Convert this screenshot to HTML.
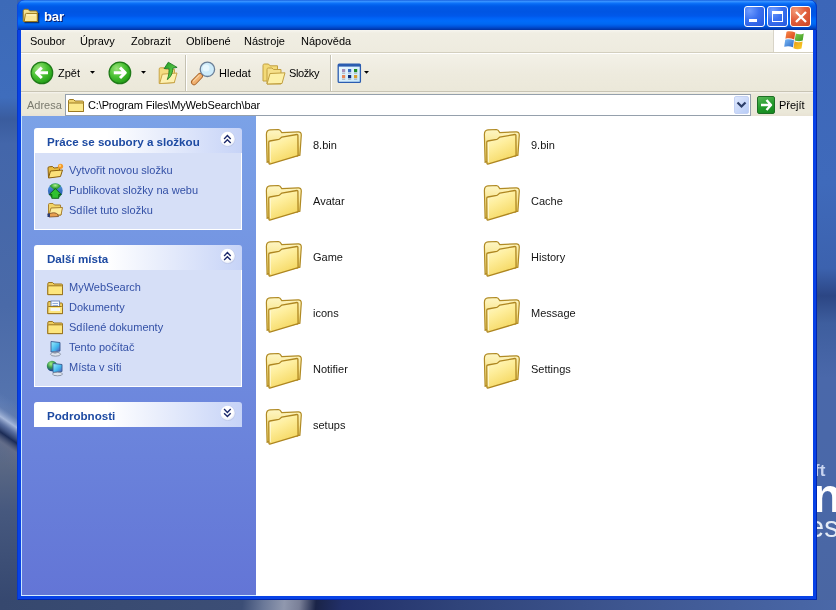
<!DOCTYPE html>
<html><head><meta charset="utf-8">
<style>
*{margin:0;padding:0;box-sizing:border-box}
html,body{width:836px;height:610px;overflow:hidden;-webkit-font-smoothing:antialiased;background:#3b62a8;font-family:"Liberation Sans",sans-serif;font-size:11px;color:#000}
.a{position:absolute}
svg.a{overflow:visible}
#dl{left:0;top:0;width:17px;height:610px;background:linear-gradient(180deg,#3c6ab8 0%,#3f6dbc 16%,#3a5c9e 20%,#4366aa 24%,#4a6aa8 50%,#4d6ca6 66%,#92a6cc 68.8%,#1e3264 71.5%,#2a3c68 73%,#5a6a8c 76%,#46587e 84%,#34466e 100%)}
#dr{left:817px;top:0;width:19px;height:610px;background:linear-gradient(180deg,#3c66b8 0%,#3f6abb 30%,#3c62ae 44%,#2c4684 48.5%,#3e5e9e 53%,#4a68aa 62%,#4a68a8 80%,#4a66a2 100%)}
#db{left:0;top:600px;width:836px;height:10px;background:linear-gradient(95deg,#36486e 0%,#3c4e76 29%,#6a7898 31.5%,#9098ae 34%,#7a8098 35.8%,#1a2448 37.8%,#22306a 41%,#30447a 55%,#3e5690 75%,#4a68a8 100%)}
#win{left:17px;top:0;width:800px;height:600px;background:#0842e6;border-radius:8px 8px 0 0;box-shadow:inset 1px 0 0 #0636cc,inset -1px -1px 0 #0026b0}
#title{left:17px;top:0;width:800px;height:30px;border-radius:7px 7px 0 0;box-shadow:inset -1px 0 0 #0436c0,inset 1px 0 0 #0a48e0;
 background:linear-gradient(180deg,#0a4fd6 0px,#3d95ff 1px,#2e8cff 2px,#0f74fa 3px,#0262ee 5px,#0058e6 7px,#0055e3 12px,#0058ea 16px,#0062f6 18px,#006cfa 21px,#0068f2 24px,#0058e2 26px,#0046c4 28px,#0030a0 30px)}
#ttext{left:44px;top:9px;color:#fff;font-weight:bold;font-size:13.2px;letter-spacing:-0.2px;text-shadow:1px 1px 0 #0a1e6e}
.tb{top:6px;width:21px;height:21px;border:1px solid #fff;border-radius:3px;background:radial-gradient(circle at 25% 20%,#6f9cff 0%,#3a70f0 45%,#2558dc 100%)}
#client{left:21px;top:30px;width:792px;height:566px;background:#fff}
#menu{left:21px;top:30px;width:792px;height:22px;background:linear-gradient(180deg,#f7f6f0 0,#f0eee3 3px,#eeebdf 100%)}
#menusep{left:21px;top:52px;width:792px;height:1px;background:#d3cfbf}
#menusep2{left:21px;top:53px;width:792px;height:1px;background:#fff}
.mi{top:35px}
#logo{left:773px;top:30px;width:40px;height:22px;background:#fff;border-left:1px solid #d8d4c8}
#tool{left:21px;top:54px;width:792px;height:38px;background:linear-gradient(180deg,#f3f1e8 0%,#eeebde 50%,#ebe8d9 100%)}
#toolsep{left:21px;top:91px;width:792px;height:1px;background:#c8c4b4}
#addr{left:21px;top:92px;width:792px;height:24px;background:linear-gradient(180deg,#f6f5ef 0,#ebe8d9 2px,#ebe8d9 20px,#e8e2d4 100%)}
.vs{width:2px;border-left:1px solid #c5c2b2;border-right:1px solid #fff}
#abox{left:65px;top:94px;width:686px;height:22px;background:#fff;border:1px solid #95a0ac}
#pane{left:21px;top:116px;width:235px;height:480px;background:linear-gradient(180deg,#7ba2e7 0%,#6375d6 100%)}
#paneedge{left:21px;top:116px;width:1px;height:480px;background:#c4e4ff}
#panebot{left:21px;top:595px;width:235px;height:1px;background:#d4ecff}
.hd{left:34px;width:208px;height:25px;border-radius:3px 3px 0 0;background:linear-gradient(90deg,#fff 0%,#fff 35%,#c6d3f7 100%)}
.hd span{position:absolute;left:13px;top:7px;font-weight:bold;font-size:11.6px;color:#1d4aa2}
.bd{left:34px;width:208px;background:#d6dff7;border:1px solid #fff;border-top:none}
.lk{left:69px;color:#3350a6;font-size:11px}
.btn{width:16px;height:16px;border-radius:50%;background:radial-gradient(circle at 40% 35%,#fff 0%,#fff 50%,#e4eafa 100%);box-shadow:1px 1px 2px rgba(40,60,140,.45)}
.fn{font-size:11px;color:#151515}
</style></head><body><div style="position:absolute;left:0;top:0;width:836px;height:610px;will-change:transform">
<svg width="0" height="0" style="position:absolute">
 <defs>
  <radialGradient id="gBtn" cx="0.45" cy="0.4" r="0.6"><stop offset="0" stop-color="#fff"/><stop offset="0.7" stop-color="#fff"/><stop offset="1" stop-color="#e6ebf8"/></radialGradient>
  <linearGradient id="gfB" x1="0" y1="0" x2="0" y2="1"><stop offset="0" stop-color="#fef6c4"/><stop offset="0.5" stop-color="#f8e48a"/><stop offset="1" stop-color="#ecd060"/></linearGradient>
  <linearGradient id="gfF" x1="0" y1="0" x2="0.5" y2="1"><stop offset="0" stop-color="#fffad0"/><stop offset="0.45" stop-color="#feee9c"/><stop offset="1" stop-color="#f5d862"/></linearGradient>
  
  
 </defs>
</svg>
<svg class="a" style="left:0;top:0" width="17" height="610" viewBox="0 0 17 610">
 <defs>
  <linearGradient id="dlv" x1="0" y1="0" x2="0" y2="610" gradientUnits="userSpaceOnUse">
   <stop offset="0" stop-color="#3c6ab8"/><stop offset="0.16" stop-color="#3f6dbc"/><stop offset="0.195" stop-color="#3a5c9e"/><stop offset="0.235" stop-color="#4366aa"/>
   <stop offset="0.5" stop-color="#4a6aa8"/><stop offset="0.66" stop-color="#5574ae"/><stop offset="0.76" stop-color="#5a6884"/><stop offset="0.84" stop-color="#46587e"/><stop offset="1" stop-color="#34466e"/>
  </linearGradient>
  <linearGradient id="dls" x1="19.9" y1="405.5" x2="-14.2" y2="455" gradientUnits="userSpaceOnUse">
   <stop offset="0" stop-color="#8ca5d2" stop-opacity="0"/><stop offset="0.2" stop-color="#8ca5d2" stop-opacity="0.2"/>
   <stop offset="0.333" stop-color="#aebfe0" stop-opacity="0.9"/><stop offset="0.44" stop-color="#506496" stop-opacity="0.7"/>
   <stop offset="0.547" stop-color="#14244e" stop-opacity="0.9"/><stop offset="0.68" stop-color="#6a6e84" stop-opacity="0.6"/><stop offset="1" stop-color="#5a6884" stop-opacity="0"/>
  </linearGradient>
 </defs>
 <rect width="17" height="610" fill="url(#dlv)"/>
 <rect width="17" height="610" fill="url(#dls)"/>
</svg><div class="a" id="dr"></div><div class="a" id="db"></div>
<div class="a" style="left:814px;top:461px;color:#c8d4f0;font-size:17px;line-height:20px;font-weight:bold">ft</div>
<div class="a" style="left:812px;top:469px;color:#fff;font-size:49px;line-height:52px;font-weight:bold">n</div>
<div class="a" style="left:808px;top:511px;color:#e4ebf6;font-size:29px;line-height:32px">es</div>
<div class="a" id="win"></div>
<div class="a" id="title"></div>
<svg class="a" style="left:22px;top:8px" width="17" height="15" viewBox="0 0 17 15">
   <path d="M2.5,14.5 L16.5,14.5 L16.5,5" stroke="#10204a" stroke-width="1.6" fill="none" opacity=".75"/>
   <path d="M1.2,13.3 L1.2,3.2 C1.2,2 2,1.3 3.2,1.3 L6,1.3 L7.6,3 L14,3 C14.8,3 15.3,3.6 15.3,4.3 L15.3,13.3 Z" fill="#f4e090" stroke="#9c7818" stroke-width="1"/>
   <path d="M2.2,13.5 L3.4,6.2 C3.5,5.7 3.9,5.4 4.4,5.4 L15.3,5.4 L15.3,13.5 Z" fill="#fde89a" stroke="#9c7818" stroke-width="1"/>
   <path d="M4.5,7 L14,7" stroke="#fff6d0" stroke-width="1"/>
  </svg>
<div class="a" id="ttext">bar</div>
<div class="a tb" style="left:744px"><div class="a" style="left:4px;top:12px;width:8px;height:3px;background:#fff"></div></div>
<div class="a tb" style="left:767px"><div class="a" style="left:4px;top:4px;width:11px;height:11px;border:1px solid #fff;border-top-width:3px"></div></div>
<div class="a tb" style="left:790px;background:radial-gradient(circle at 25% 20%,#f39a78 0%,#e2603e 45%,#cc4424 100%)">
 <svg class="a" style="left:4px;top:4px" width="12" height="12"><path d="M1,1 L11,11 M11,1 L1,11" stroke="#fff" stroke-width="2.3"/></svg>
</div>
<div class="a" id="client"></div>
<div class="a" id="menu"></div>
<div class="a" id="menusep"></div><div class="a" id="menusep2"></div>
<div class="a mi" style="left:30px">Soubor</div>
<div class="a mi" style="left:80px">Úpravy</div>
<div class="a mi" style="left:131px">Zobrazit</div>
<div class="a mi" style="left:186px">Oblíbené</div>
<div class="a mi" style="left:244px">Nástroje</div>
<div class="a mi" style="left:301px">Nápověda</div>
<div class="a" id="logo"></div>
<svg class="a" style="left:783px;top:31px" width="22" height="19" viewBox="0 0 22 19">
 <defs>
  <linearGradient id="fR" x1="0" y1="0" x2="1" y2="1"><stop offset="0" stop-color="#f88a50"/><stop offset="1" stop-color="#d84412"/></linearGradient>
  <linearGradient id="fGr" x1="0" y1="0" x2="1" y2="1"><stop offset="0" stop-color="#7fcc50"/><stop offset="1" stop-color="#3c9a22"/></linearGradient>
  <linearGradient id="fB" x1="0" y1="0" x2="1" y2="1"><stop offset="0" stop-color="#7ab8f4"/><stop offset="1" stop-color="#2a6ac8"/></linearGradient>
  <linearGradient id="fY" x1="0" y1="0" x2="1" y2="1"><stop offset="0" stop-color="#e89a18"/><stop offset="1" stop-color="#fad028"/></linearGradient>
 </defs>
 <path d="M3.5,0.8 C6,0 9,0.3 12.3,1.5 L11.2,8.4 C8,7.2 5.2,7 2.4,7.8 Z" fill="url(#fR)"/>
 <path d="M12.8,2.6 C15.5,3.6 18,3.6 20.8,2.5 L19.7,9.6 C17,10.6 14.5,10.5 11.7,9.5 Z" fill="url(#fGr)"/>
 <path d="M2.2,8.8 C5,8 8,8.2 11,9.3 L9.9,16.2 C7,15 4.2,14.8 1.2,15.8 Z" fill="url(#fB)"/>
 <path d="M11.5,10.3 C14.3,11.4 16.8,11.4 19.6,10.4 L18.5,17.5 C15.8,18.5 13.2,18.4 10.4,17.3 Z" fill="url(#fY)"/>
</svg>
<div class="a" id="tool"></div>
<div class="a" id="toolsep"></div>
<!-- back -->
<svg class="a" style="left:29px;top:60px" width="26" height="26" viewBox="0 0 26 26">
 <defs><radialGradient id="gG" cx="0.35" cy="0.3" r="0.75"><stop offset="0" stop-color="#9be37a"/><stop offset="0.5" stop-color="#4cc235"/><stop offset="1" stop-color="#1e9a14"/></radialGradient></defs>
 <circle cx="12.9" cy="12.9" r="10.8" fill="url(#gG)" stroke="#1f7a18" stroke-width="1.2"/>
 <path d="M12.8,7.6 L7.5,12.8 L12.8,18 M7.8,12.8 L19,12.8" fill="none" stroke="#fff" stroke-width="3" stroke-linejoin="round"/>
</svg>
<div class="a" style="left:58px;top:67px">Zpět</div>
<svg class="a" style="left:89px;top:71px" width="7" height="4"><path d="M1,0 L6,0 L3.5,2.8 Z" fill="#000"/></svg>
<!-- forward -->
<svg class="a" style="left:107px;top:60px" width="26" height="26" viewBox="0 0 26 26">
 <circle cx="12.9" cy="12.9" r="10.8" fill="url(#gG)" stroke="#1f7a18" stroke-width="1.2"/>
 <path d="M13,7.6 L18.3,12.8 L13,18 M18,12.8 L6.8,12.8" fill="none" stroke="#fff" stroke-width="3" stroke-linejoin="round"/>
</svg>
<svg class="a" style="left:140px;top:71px" width="7" height="4"><path d="M1,0 L6,0 L3.5,2.8 Z" fill="#000"/></svg>
<!-- up -->
<svg class="a" style="left:156px;top:60px" width="24" height="26" viewBox="0 0 24 26">
 <defs><linearGradient id="gUp" x1="0" y1="0" x2="1" y2="1"><stop offset="0" stop-color="#1e9a20"/><stop offset="0.6" stop-color="#58c848"/><stop offset="1" stop-color="#1a8a1e"/></linearGradient></defs>
 <path d="M3.2,23.5 L3.2,9 C3.2,8.2 3.6,7.8 4.4,7.8 L8,7.8 L9.5,9.3 L18.5,9.3 L18.5,22.5 Z" fill="#f3dc80" stroke="#c8a448" stroke-width="1"/>
 <path d="M3.6,23.6 L6.3,14.2 L21,13 L18.3,22.6 Z" fill="#fdf0b0" stroke="#c8a448" stroke-width="1"/>
 <path d="M12.3,2.2 L8.1,8.6 L12.8,8.3 C13.3,11 13,15 11.3,19.6 C14.5,17.5 16.5,14 16.9,8.1 L21.1,7.4 Z" fill="url(#gUp)" stroke="#14701a" stroke-width="0.8" stroke-linejoin="round"/>
</svg>
<div class="a vs" style="left:185px;top:55px;height:36px"></div>
<!-- search -->
<svg class="a" style="left:190px;top:60px" width="28" height="26" viewBox="0 0 28 26">
 <path d="M10,16 L4,22.2" stroke="#a8642a" stroke-width="6" stroke-linecap="round"/>
 <path d="M10,16 L4,22.2" stroke="#f0b070" stroke-width="4.2" stroke-linecap="round"/>
 <path d="M9,15.5 L3.5,21" stroke="#ffe0b0" stroke-width="1.2" stroke-linecap="round" opacity=".7"/>
 <circle cx="17.4" cy="9.3" r="7.2" fill="#cdebfa" stroke="#6a7e96" stroke-width="1.3"/>
 <circle cx="16" cy="8" r="3.5" fill="#eefaff" opacity=".8"/>
</svg>
<div class="a" style="left:219px;top:67px">Hledat</div>
<!-- folders -->
<svg class="a" style="left:261px;top:62px" width="26" height="24" viewBox="0 0 26 24">
 <path d="M2,19 L2,3.5 C2,2.6 2.5,2 3.4,2 L7.5,2 L9,3.8 L16.5,3.8 L16.5,19 Z" fill="#f3da78" stroke="#c2a040" stroke-width="1"/>
 <path d="M6,22 L6,7.5 C6,6.6 6.5,6 7.4,6 L11,6 L12.5,7.5 L20,7.5 L20,22 Z" fill="#f6e08a" stroke="#c2a040" stroke-width="1"/>
 <path d="M6,22 L9,11.5 L24,10.8 L21,21.5 Z" fill="#fdf0a6" stroke="#c2a040" stroke-width="1"/>
</svg>
<div class="a" style="left:289px;top:67px;letter-spacing:-0.4px">Složky</div>
<div class="a vs" style="left:330px;top:55px;height:36px"></div>
<!-- views -->
<svg class="a" style="left:337px;top:63px" width="25" height="21" viewBox="0 0 25 21">
 <defs><linearGradient id="gVw" x1="0" y1="0" x2="1" y2="1"><stop offset="0" stop-color="#f0faff"/><stop offset="1" stop-color="#c4e6fa"/></linearGradient></defs><rect x="1.2" y="1.2" width="22.2" height="18.2" rx="1" fill="url(#gVw)" stroke="#2a5cb0" stroke-width="1.3"/>
 <rect x="1" y="1" width="22.5" height="2.6" fill="#2a5cb0"/>
 <rect x="5" y="6" width="3.2" height="3.2" fill="#a890b8"/><rect x="11" y="6" width="3.2" height="3.2" fill="#3c6cc0"/><rect x="17" y="6" width="3.2" height="3.2" fill="#1e8a28"/>
 <rect x="5" y="12" width="3.2" height="3.2" fill="#e8885a"/><rect x="11" y="12" width="3.2" height="3.2" fill="#102e78"/><rect x="17" y="12" width="3.2" height="3.2" fill="#d8a030"/>
 <path d="M5,10.3h3.2M11,10.3h3.2M17,10.3h3.2M5,16.3h3.2M11,16.3h3.2M17,16.3h3.2" stroke="#9aa6b4" stroke-width=".8"/>
</svg>
<svg class="a" style="left:363px;top:71px" width="7" height="4"><path d="M1,0 L6,0 L3.5,2.8 Z" fill="#000"/></svg>
<!-- address -->
<div class="a" id="addr"></div>
<div class="a" style="left:27px;top:99px;color:#7a7a6e">Adresa</div>
<div class="a" id="abox"></div>
<svg class="a" style="left:67px;top:98px" width="18" height="15" viewBox="0 0 18 15">
 <path d="M1.5,13.5 L1.5,3 C1.5,2 2,1.5 3,1.5 L6.5,1.5 L8,3 L15.5,3 C16.2,3 16.5,3.5 16.5,4 L16.5,13.5 Z" fill="#f0d470" stroke="#9c7a20" stroke-width="1"/>
 <path d="M1.5,13.5 L1.5,6 C1.5,5.4 1.9,5 2.5,5 L15.5,5 C16.1,5 16.5,5.4 16.5,6 L16.5,13.5 Z" fill="#fce98c" stroke="#9c7a20" stroke-width="1"/>
</svg>
<div class="a" style="left:88px;top:99px;letter-spacing:-0.14px">C:\Program Files\MyWebSearch\bar</div>
<div class="a" style="left:734px;top:96px;width:15px;height:18px;border-radius:2px;background:linear-gradient(135deg,#dfe8fd,#b8ccf6);border:1px solid #c4d2f4"></div>
<svg class="a" style="left:736px;top:101px" width="11" height="8"><path d="M1.5,1.5 L5.5,5.5 L9.5,1.5" fill="none" stroke="#2c3e68" stroke-width="2.2"/></svg>
<div class="a" style="left:757px;top:96px;width:18px;height:18px;border-radius:2px;background:linear-gradient(160deg,#58b858,#229a2a 55%,#14861e);border:1px solid #1e6e24"></div>
<svg class="a" style="left:757px;top:96px" width="18" height="18" viewBox="0 0 18 18"><path d="M9.5,4 L14,9 L9.5,14 M13.5,9 L4,9" fill="none" stroke="#fff" stroke-width="2.4" stroke-linejoin="round"/></svg>
<div class="a" style="left:779px;top:99px">Přejít</div>
<!-- pane -->
<div class="a" id="pane"></div>
<div class="a" id="paneedge"></div><div class="a" id="panebot"></div>
<div class="a hd" style="top:128px"><span>Práce se soubory a složkou</span></div>
<svg class="a" style="left:218px;top:130px" width="20" height="18" viewBox="0 0 20 18"><circle cx="9.9" cy="9.4" r="7.6" fill="#b4bedc" opacity=".55"/><circle cx="9.6" cy="9" r="7.2" fill="url(#gBtn)"/><path d="M6.1,8.9 L9.4,5.6 L12.7,8.9 M6.1,13 L9.4,9.7 L12.7,13" fill="none" stroke="#1c2a6c" stroke-width="1.4"/></svg>
<div class="a bd" style="top:153px;height:77px"></div>
<div class="a lk" style="top:164px">Vytvořit novou složku</div>
<div class="a lk" style="top:184px">Publikovat složky na webu</div>
<div class="a lk" style="top:204px">Sdílet tuto složku</div>
<div class="a hd" style="top:245px"><span>Další místa</span></div>
<svg class="a" style="left:218px;top:247px" width="20" height="18" viewBox="0 0 20 18"><circle cx="9.9" cy="9.4" r="7.6" fill="#b4bedc" opacity=".55"/><circle cx="9.6" cy="9" r="7.2" fill="url(#gBtn)"/><path d="M6.1,8.9 L9.4,5.6 L12.7,8.9 M6.1,13 L9.4,9.7 L12.7,13" fill="none" stroke="#1c2a6c" stroke-width="1.4"/></svg>
<div class="a bd" style="top:270px;height:117px"></div>
<div class="a lk" style="top:281px">MyWebSearch</div>
<div class="a lk" style="top:301px">Dokumenty</div>
<div class="a lk" style="top:321px">Sdílené dokumenty</div>
<div class="a lk" style="top:341px">Tento počítač</div>
<div class="a lk" style="top:361px">Místa v síti</div>
<div class="a hd" style="top:402px"><span>Podrobnosti</span></div>
<svg class="a" style="left:218px;top:404px" width="20" height="18" viewBox="0 0 20 18"><circle cx="9.9" cy="9.4" r="7.6" fill="#b4bedc" opacity=".55"/><circle cx="9.6" cy="9" r="7.2" fill="url(#gBtn)"/><path d="M6.1,5.1 L9.4,8.4 L12.7,5.1 M6.1,9.2 L9.4,12.5 L12.7,9.2" fill="none" stroke="#1c2a6c" stroke-width="1.4"/></svg>

<!-- task icons -->
<svg class="a" style="left:46px;top:162px" width="18" height="18" viewBox="0 0 18 18">
 <path d="M2.5,15.5 L2,6 C2,5.2 2.4,4.8 3.2,4.8 L6.5,4.5 L8,6 L13.5,5.5 L14,14 Z" fill="#e8bc40" stroke="#8a6010" stroke-width="1"/>
 <path d="M2.5,16 L4.5,9 L16.5,8 L14.5,14.5 Z" fill="#fbe07a" stroke="#8a6010" stroke-width="1"/>
 <circle cx="14.5" cy="4.3" r="2.6" fill="#f49a2a"/><circle cx="14" cy="3.8" r="1.2" fill="#ffd070"/>
</svg>
<svg class="a" style="left:46px;top:182px" width="18" height="18" viewBox="0 0 18 18">
 <defs><radialGradient id="gGl" cx="0.5" cy="0.3" r="0.7"><stop offset="0" stop-color="#b0f090"/><stop offset="0.5" stop-color="#3aa83a"/><stop offset="1" stop-color="#1a6a2a"/></radialGradient>
 <linearGradient id="gBl" x1="0" y1="0" x2="0" y2="1"><stop offset="0" stop-color="#5aa0e8"/><stop offset="1" stop-color="#1a4aa0"/></linearGradient></defs>
 <circle cx="9.3" cy="8.7" r="7.4" fill="url(#gBl)"/>
 <path d="M9.3,8.7 L3.6,3.9 A7.4,7.4 0 0 1 15,3.9 Z" fill="url(#gGl)"/>
 <path d="M9.3,8.7 L15,13.5 A7.4,7.4 0 0 1 3.6,13.5 Z" fill="#2a9a2a"/>
 <path d="M9.3,6.5 L15.3,12.5 L12.8,12.5 L12.8,16.3 L5.8,16.3 L5.8,12.5 L3.3,12.5 Z" fill="#30c030" stroke="#0a5a14" stroke-width=".9" stroke-linejoin="round"/>
</svg>
<svg class="a" style="left:46px;top:201px" width="18" height="17" viewBox="0 0 18 17">
 <path d="M2.5,14 L2.5,3.5 C2.5,2.8 3,2.5 3.6,2.5 L7,2.5 L8.5,4 L14.5,4 L15,14 Z" fill="#f2d468" stroke="#a88030" stroke-width="1"/>
 <path d="M3,14 L5,7 L16.5,6.5 L15,14 Z" fill="#fdec9c" stroke="#a88030" stroke-width="1"/>
 <path d="M2,13 L6,12 C8,11.5 10,12 11.5,13 L12.5,15.5 L3,16 Z" fill="#e8a050" stroke="#7a4a20" stroke-width=".8"/>
 <rect x="1.5" y="12.5" width="2.5" height="3.5" fill="#2a3a70"/>
</svg>
<svg class="a" style="left:46px;top:281px" width="18" height="15" viewBox="0 0 18 15">
 <path d="M1.8,13.6 L1.8,2.8 C1.8,2 2.3,1.5 3,1.5 L6.5,1.5 L8,3 L15.5,3 C16.2,3 16.5,3.5 16.5,4 L16.5,13.6 Z" fill="#eccb5c" stroke="#9a7420" stroke-width="1"/>
 <path d="M1.8,13.6 L1.8,5.8 C1.8,5.2 2.2,4.8 2.8,4.8 L15.5,4.8 C16.1,4.8 16.5,5.2 16.5,5.8 L16.5,13.6 Z" fill="#fde67e" stroke="#9a7420" stroke-width="1"/>
</svg>
<svg class="a" style="left:46px;top:300px" width="18" height="15" viewBox="0 0 18 15">
 <path d="M1.8,13.6 L1.8,2.8 C1.8,2 2.3,1.5 3,1.5 L6.5,1.5 L8,3 L15.5,3 C16.2,3 16.5,3.5 16.5,4 L16.5,13.6 Z" fill="#eccb5c" stroke="#9a7420" stroke-width="1"/>
 <rect x="5" y="1" width="8.5" height="9" fill="#f4f8ff" stroke="#6a86b8" stroke-width=".9"/>
 <path d="M6.5,3.5h5.5M6.5,5.5h5.5" stroke="#7a9ad0" stroke-width=".8"/>
 <path d="M1.8,13.6 L1.8,7.5 C1.8,6.9 2.2,6.5 2.8,6.5 L15.5,6.5 C16.1,6.5 16.5,6.9 16.5,7.5 L16.5,13.6 Z" fill="#fde67e" stroke="#9a7420" stroke-width="1"/>
 <rect x="4.5" y="8" width="9.5" height="3" fill="#f4f8ff" opacity=".9"/>
</svg>
<svg class="a" style="left:46px;top:320px" width="18" height="15" viewBox="0 0 18 15">
 <path d="M1.8,13.6 L1.8,2.8 C1.8,2 2.3,1.5 3,1.5 L6.5,1.5 L8,3 L15.5,3 C16.2,3 16.5,3.5 16.5,4 L16.5,13.6 Z" fill="#eccb5c" stroke="#9a7420" stroke-width="1"/>
 <path d="M1.8,13.6 L1.8,5.8 C1.8,5.2 2.2,4.8 2.8,4.8 L15.5,4.8 C16.1,4.8 16.5,5.2 16.5,5.8 L16.5,13.6 Z" fill="#fde67e" stroke="#9a7420" stroke-width="1"/>
</svg>
<svg class="a" style="left:48px;top:340px" width="14" height="17" viewBox="0 0 14 17">
 <defs><linearGradient id="gMon" x1="0" y1="0" x2="1" y2="1"><stop offset="0" stop-color="#9ef0ff"/><stop offset="0.6" stop-color="#40b4ec"/><stop offset="1" stop-color="#5a50b8"/></linearGradient></defs>
 <path d="M3,1.5 L12,2.5 L12,11 L3,12 Z" fill="url(#gMon)" stroke="#3a5a90" stroke-width=".9"/>
 <ellipse cx="7.5" cy="14.2" rx="5" ry="2" fill="#dfe4ec" stroke="#7a8498" stroke-width=".8"/>
 <rect x="5.5" y="11.5" width="3" height="2" fill="#8a94a8"/>
</svg>
<svg class="a" style="left:46px;top:359px" width="18" height="17" viewBox="0 0 18 17">
 <defs><radialGradient id="gNw" cx="0.4" cy="0.3" r="0.7"><stop offset="0" stop-color="#a8f080"/><stop offset="0.5" stop-color="#3a9a50"/><stop offset="1" stop-color="#1a3a90"/></radialGradient></defs><circle cx="6" cy="7" r="5.2" fill="url(#gNw)"/>
 <path d="M7,4.5 L16,5.5 L16,12.5 L7,13.5 Z" fill="url(#gMon)" stroke="#3a5a90" stroke-width=".9"/>
 <ellipse cx="11.5" cy="15" rx="5" ry="1.8" fill="#dfe4ec" stroke="#7a8498" stroke-width=".8"/>
</svg>
<!-- files -->
<svg class="a" style="left:262px;top:125px" width="44" height="44" viewBox="0 0 44 44">
   <path d="M5.1,37.2 L4.4,9.8 C4.3,6.5 5.4,4.9 8,4.8 L16.5,4.5 C17.8,4.5 18.6,5.5 19.8,7.6 L36.2,6.8 C38,6.7 39.3,7.8 39.3,10 L37.9,30.2 Z" fill="url(#gfB)" stroke="#b08a24" stroke-width="1.2"/>
   <path d="M7,38.6 L6.8,17 C6.8,16.4 7.1,16.1 7.8,16 L16.8,14.4 C18,14.1 18.8,12.6 19.8,12.1 L34.9,9.5 C35.5,9.4 35.9,9.8 35.9,10.3 L36.1,30.1 C36.1,30.6 35.8,30.9 35.3,31 L7.8,39 C7.3,39.1 7,39 7,38.6 Z" fill="url(#gfF)" stroke="#ae8620" stroke-width="1.3"/>
   <path d="M8.3,17.5 L8.4,37" stroke="#fffbe0" stroke-width="1.2" opacity=".7"/>
  </svg>
<div class="a fn" style="left:313px;top:139px">8.bin</div>
<svg class="a" style="left:480px;top:125px" width="44" height="44" viewBox="0 0 44 44">
   <path d="M5.1,37.2 L4.4,9.8 C4.3,6.5 5.4,4.9 8,4.8 L16.5,4.5 C17.8,4.5 18.6,5.5 19.8,7.6 L36.2,6.8 C38,6.7 39.3,7.8 39.3,10 L37.9,30.2 Z" fill="url(#gfB)" stroke="#b08a24" stroke-width="1.2"/>
   <path d="M7,38.6 L6.8,17 C6.8,16.4 7.1,16.1 7.8,16 L16.8,14.4 C18,14.1 18.8,12.6 19.8,12.1 L34.9,9.5 C35.5,9.4 35.9,9.8 35.9,10.3 L36.1,30.1 C36.1,30.6 35.8,30.9 35.3,31 L7.8,39 C7.3,39.1 7,39 7,38.6 Z" fill="url(#gfF)" stroke="#ae8620" stroke-width="1.3"/>
   <path d="M8.3,17.5 L8.4,37" stroke="#fffbe0" stroke-width="1.2" opacity=".7"/>
  </svg>
<div class="a fn" style="left:531px;top:139px">9.bin</div>
<svg class="a" style="left:262px;top:181px" width="44" height="44" viewBox="0 0 44 44">
   <path d="M5.1,37.2 L4.4,9.8 C4.3,6.5 5.4,4.9 8,4.8 L16.5,4.5 C17.8,4.5 18.6,5.5 19.8,7.6 L36.2,6.8 C38,6.7 39.3,7.8 39.3,10 L37.9,30.2 Z" fill="url(#gfB)" stroke="#b08a24" stroke-width="1.2"/>
   <path d="M7,38.6 L6.8,17 C6.8,16.4 7.1,16.1 7.8,16 L16.8,14.4 C18,14.1 18.8,12.6 19.8,12.1 L34.9,9.5 C35.5,9.4 35.9,9.8 35.9,10.3 L36.1,30.1 C36.1,30.6 35.8,30.9 35.3,31 L7.8,39 C7.3,39.1 7,39 7,38.6 Z" fill="url(#gfF)" stroke="#ae8620" stroke-width="1.3"/>
   <path d="M8.3,17.5 L8.4,37" stroke="#fffbe0" stroke-width="1.2" opacity=".7"/>
  </svg>
<div class="a fn" style="left:313px;top:195px">Avatar</div>
<svg class="a" style="left:480px;top:181px" width="44" height="44" viewBox="0 0 44 44">
   <path d="M5.1,37.2 L4.4,9.8 C4.3,6.5 5.4,4.9 8,4.8 L16.5,4.5 C17.8,4.5 18.6,5.5 19.8,7.6 L36.2,6.8 C38,6.7 39.3,7.8 39.3,10 L37.9,30.2 Z" fill="url(#gfB)" stroke="#b08a24" stroke-width="1.2"/>
   <path d="M7,38.6 L6.8,17 C6.8,16.4 7.1,16.1 7.8,16 L16.8,14.4 C18,14.1 18.8,12.6 19.8,12.1 L34.9,9.5 C35.5,9.4 35.9,9.8 35.9,10.3 L36.1,30.1 C36.1,30.6 35.8,30.9 35.3,31 L7.8,39 C7.3,39.1 7,39 7,38.6 Z" fill="url(#gfF)" stroke="#ae8620" stroke-width="1.3"/>
   <path d="M8.3,17.5 L8.4,37" stroke="#fffbe0" stroke-width="1.2" opacity=".7"/>
  </svg>
<div class="a fn" style="left:531px;top:195px">Cache</div>
<svg class="a" style="left:262px;top:237px" width="44" height="44" viewBox="0 0 44 44">
   <path d="M5.1,37.2 L4.4,9.8 C4.3,6.5 5.4,4.9 8,4.8 L16.5,4.5 C17.8,4.5 18.6,5.5 19.8,7.6 L36.2,6.8 C38,6.7 39.3,7.8 39.3,10 L37.9,30.2 Z" fill="url(#gfB)" stroke="#b08a24" stroke-width="1.2"/>
   <path d="M7,38.6 L6.8,17 C6.8,16.4 7.1,16.1 7.8,16 L16.8,14.4 C18,14.1 18.8,12.6 19.8,12.1 L34.9,9.5 C35.5,9.4 35.9,9.8 35.9,10.3 L36.1,30.1 C36.1,30.6 35.8,30.9 35.3,31 L7.8,39 C7.3,39.1 7,39 7,38.6 Z" fill="url(#gfF)" stroke="#ae8620" stroke-width="1.3"/>
   <path d="M8.3,17.5 L8.4,37" stroke="#fffbe0" stroke-width="1.2" opacity=".7"/>
  </svg>
<div class="a fn" style="left:313px;top:251px">Game</div>
<svg class="a" style="left:480px;top:237px" width="44" height="44" viewBox="0 0 44 44">
   <path d="M5.1,37.2 L4.4,9.8 C4.3,6.5 5.4,4.9 8,4.8 L16.5,4.5 C17.8,4.5 18.6,5.5 19.8,7.6 L36.2,6.8 C38,6.7 39.3,7.8 39.3,10 L37.9,30.2 Z" fill="url(#gfB)" stroke="#b08a24" stroke-width="1.2"/>
   <path d="M7,38.6 L6.8,17 C6.8,16.4 7.1,16.1 7.8,16 L16.8,14.4 C18,14.1 18.8,12.6 19.8,12.1 L34.9,9.5 C35.5,9.4 35.9,9.8 35.9,10.3 L36.1,30.1 C36.1,30.6 35.8,30.9 35.3,31 L7.8,39 C7.3,39.1 7,39 7,38.6 Z" fill="url(#gfF)" stroke="#ae8620" stroke-width="1.3"/>
   <path d="M8.3,17.5 L8.4,37" stroke="#fffbe0" stroke-width="1.2" opacity=".7"/>
  </svg>
<div class="a fn" style="left:531px;top:251px">History</div>
<svg class="a" style="left:262px;top:293px" width="44" height="44" viewBox="0 0 44 44">
   <path d="M5.1,37.2 L4.4,9.8 C4.3,6.5 5.4,4.9 8,4.8 L16.5,4.5 C17.8,4.5 18.6,5.5 19.8,7.6 L36.2,6.8 C38,6.7 39.3,7.8 39.3,10 L37.9,30.2 Z" fill="url(#gfB)" stroke="#b08a24" stroke-width="1.2"/>
   <path d="M7,38.6 L6.8,17 C6.8,16.4 7.1,16.1 7.8,16 L16.8,14.4 C18,14.1 18.8,12.6 19.8,12.1 L34.9,9.5 C35.5,9.4 35.9,9.8 35.9,10.3 L36.1,30.1 C36.1,30.6 35.8,30.9 35.3,31 L7.8,39 C7.3,39.1 7,39 7,38.6 Z" fill="url(#gfF)" stroke="#ae8620" stroke-width="1.3"/>
   <path d="M8.3,17.5 L8.4,37" stroke="#fffbe0" stroke-width="1.2" opacity=".7"/>
  </svg>
<div class="a fn" style="left:313px;top:307px">icons</div>
<svg class="a" style="left:480px;top:293px" width="44" height="44" viewBox="0 0 44 44">
   <path d="M5.1,37.2 L4.4,9.8 C4.3,6.5 5.4,4.9 8,4.8 L16.5,4.5 C17.8,4.5 18.6,5.5 19.8,7.6 L36.2,6.8 C38,6.7 39.3,7.8 39.3,10 L37.9,30.2 Z" fill="url(#gfB)" stroke="#b08a24" stroke-width="1.2"/>
   <path d="M7,38.6 L6.8,17 C6.8,16.4 7.1,16.1 7.8,16 L16.8,14.4 C18,14.1 18.8,12.6 19.8,12.1 L34.9,9.5 C35.5,9.4 35.9,9.8 35.9,10.3 L36.1,30.1 C36.1,30.6 35.8,30.9 35.3,31 L7.8,39 C7.3,39.1 7,39 7,38.6 Z" fill="url(#gfF)" stroke="#ae8620" stroke-width="1.3"/>
   <path d="M8.3,17.5 L8.4,37" stroke="#fffbe0" stroke-width="1.2" opacity=".7"/>
  </svg>
<div class="a fn" style="left:531px;top:307px">Message</div>
<svg class="a" style="left:262px;top:349px" width="44" height="44" viewBox="0 0 44 44">
   <path d="M5.1,37.2 L4.4,9.8 C4.3,6.5 5.4,4.9 8,4.8 L16.5,4.5 C17.8,4.5 18.6,5.5 19.8,7.6 L36.2,6.8 C38,6.7 39.3,7.8 39.3,10 L37.9,30.2 Z" fill="url(#gfB)" stroke="#b08a24" stroke-width="1.2"/>
   <path d="M7,38.6 L6.8,17 C6.8,16.4 7.1,16.1 7.8,16 L16.8,14.4 C18,14.1 18.8,12.6 19.8,12.1 L34.9,9.5 C35.5,9.4 35.9,9.8 35.9,10.3 L36.1,30.1 C36.1,30.6 35.8,30.9 35.3,31 L7.8,39 C7.3,39.1 7,39 7,38.6 Z" fill="url(#gfF)" stroke="#ae8620" stroke-width="1.3"/>
   <path d="M8.3,17.5 L8.4,37" stroke="#fffbe0" stroke-width="1.2" opacity=".7"/>
  </svg>
<div class="a fn" style="left:313px;top:363px">Notifier</div>
<svg class="a" style="left:480px;top:349px" width="44" height="44" viewBox="0 0 44 44">
   <path d="M5.1,37.2 L4.4,9.8 C4.3,6.5 5.4,4.9 8,4.8 L16.5,4.5 C17.8,4.5 18.6,5.5 19.8,7.6 L36.2,6.8 C38,6.7 39.3,7.8 39.3,10 L37.9,30.2 Z" fill="url(#gfB)" stroke="#b08a24" stroke-width="1.2"/>
   <path d="M7,38.6 L6.8,17 C6.8,16.4 7.1,16.1 7.8,16 L16.8,14.4 C18,14.1 18.8,12.6 19.8,12.1 L34.9,9.5 C35.5,9.4 35.9,9.8 35.9,10.3 L36.1,30.1 C36.1,30.6 35.8,30.9 35.3,31 L7.8,39 C7.3,39.1 7,39 7,38.6 Z" fill="url(#gfF)" stroke="#ae8620" stroke-width="1.3"/>
   <path d="M8.3,17.5 L8.4,37" stroke="#fffbe0" stroke-width="1.2" opacity=".7"/>
  </svg>
<div class="a fn" style="left:531px;top:363px">Settings</div>
<svg class="a" style="left:262px;top:405px" width="44" height="44" viewBox="0 0 44 44">
   <path d="M5.1,37.2 L4.4,9.8 C4.3,6.5 5.4,4.9 8,4.8 L16.5,4.5 C17.8,4.5 18.6,5.5 19.8,7.6 L36.2,6.8 C38,6.7 39.3,7.8 39.3,10 L37.9,30.2 Z" fill="url(#gfB)" stroke="#b08a24" stroke-width="1.2"/>
   <path d="M7,38.6 L6.8,17 C6.8,16.4 7.1,16.1 7.8,16 L16.8,14.4 C18,14.1 18.8,12.6 19.8,12.1 L34.9,9.5 C35.5,9.4 35.9,9.8 35.9,10.3 L36.1,30.1 C36.1,30.6 35.8,30.9 35.3,31 L7.8,39 C7.3,39.1 7,39 7,38.6 Z" fill="url(#gfF)" stroke="#ae8620" stroke-width="1.3"/>
   <path d="M8.3,17.5 L8.4,37" stroke="#fffbe0" stroke-width="1.2" opacity=".7"/>
  </svg>
<div class="a fn" style="left:313px;top:419px">setups</div>
</div></body></html>
